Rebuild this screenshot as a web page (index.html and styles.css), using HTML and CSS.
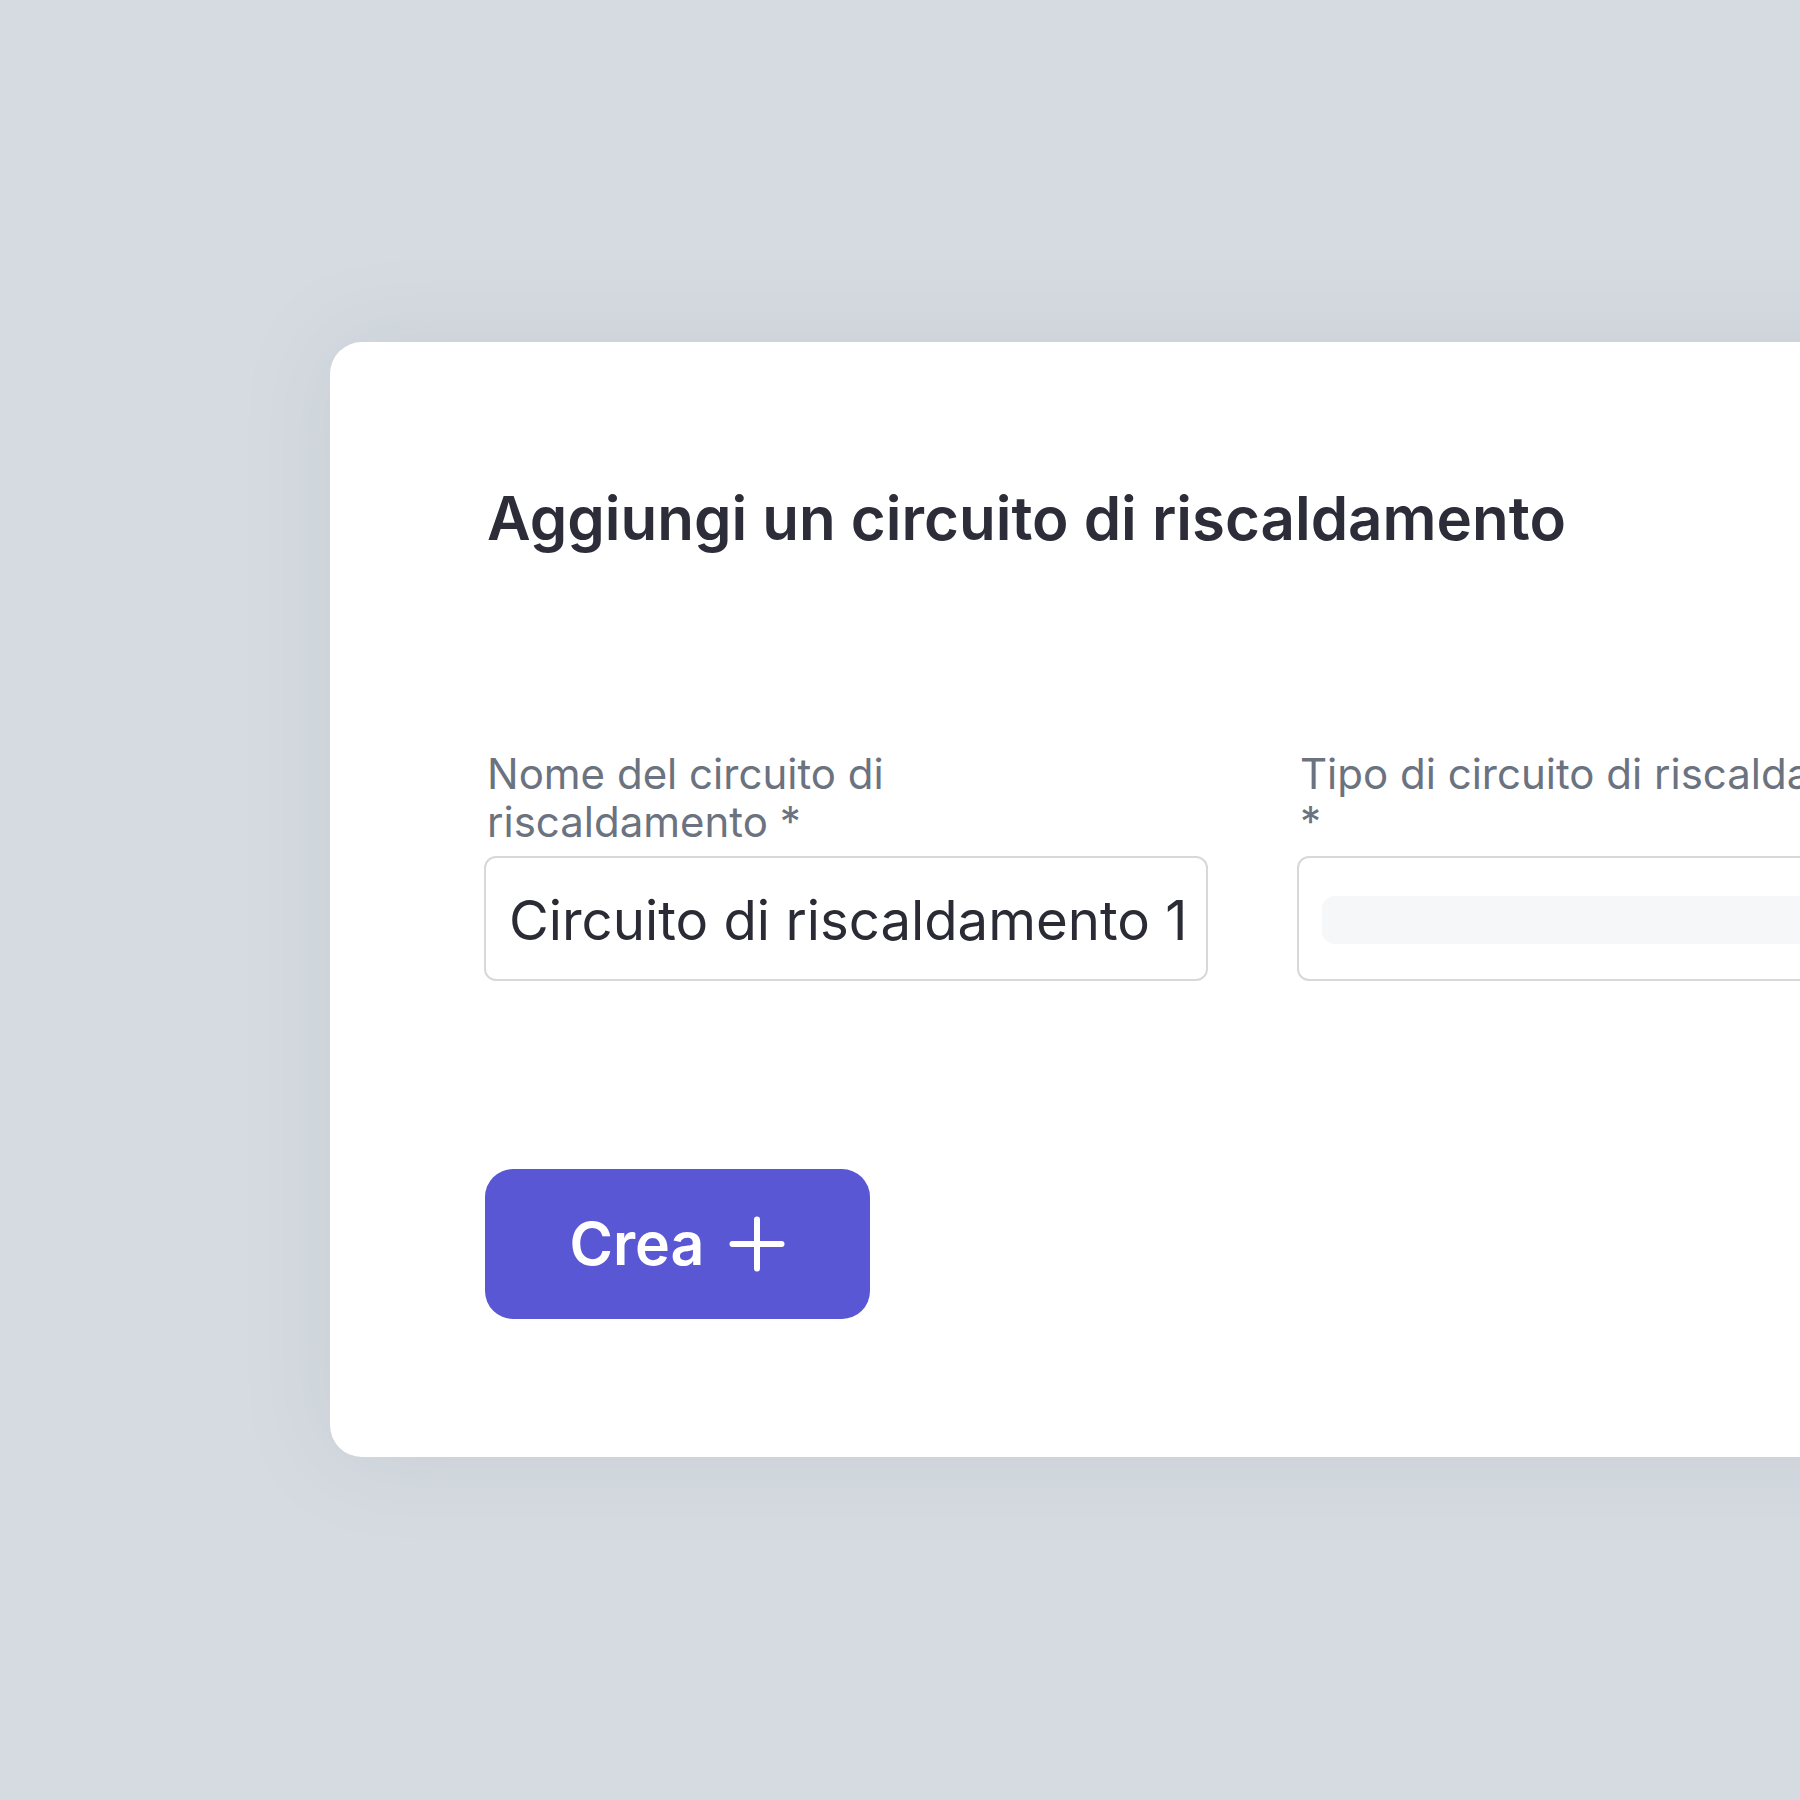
FILE: index.html
```html
<!DOCTYPE html>
<html lang="it">
<head>
<meta charset="utf-8">
<title>Aggiungi un circuito di riscaldamento</title>
<link rel="stylesheet" href="styles.css">
</head>
<body>
<div class="stage">
  <section class="card">
    <h1 class="title">Aggiungi un circuito di riscaldamento</h1>
    <div class="fields">
      <div class="field field-name">
        <label class="label label-name" for="nome">Nome del circuito di riscaldamento *</label>
        <div class="input">
          <span class="input-value" id="nome">Circuito di riscaldamento 1</span>
        </div>
      </div>
      <div class="field field-type">
        <label class="label label-type">Tipo di circuito di riscaldamento *</label>
        <div class="input">
          <span class="skeleton"></span>
        </div>
      </div>
    </div>
    <button class="btn" type="button">
      <span class="btn-text">Crea</span>
      <svg class="btn-icon" viewBox="0 0 56 56" width="56" height="56" aria-hidden="true">
        <line x1="28" y1="3.5" x2="28" y2="52.5"/>
        <line x1="3.5" y1="28" x2="52.5" y2="28"/>
      </svg>
    </button>
  </section>
</div>
</body>
</html>
```

FILE: styles.css
```css
html, body {
  margin: 0;
  padding: 0;
}

body {
  width: 1800px;
  height: 1800px;
  overflow: hidden;
  background: #d6dbe2;
  font-family: Inter, "Noto Sans", "Liberation Sans", sans-serif;
}

.stage {
  padding: 342px 0 0 330px;
}

.card {
  box-sizing: border-box;
  width: 1600px;
  background: #ffffff;
  border-radius: 32px;
  padding: 140px 0 138px 154px;
  box-shadow: 0 0 90px rgba(110, 125, 130, 0.14);
}

.title {
  margin: 0;
  padding-left: 3px;
  font-size: 60px;
  line-height: 72px;
  font-weight: 600;
  color: #2c2d38;
  letter-spacing: 0;
}

.fields {
  display: flex;
  gap: 89px;
  margin-top: 196px;
}

.field {
  display: flex;
  flex-direction: column;
  gap: 10px;
  width: 724px;
  flex: none;
}

.label {
  display: block;
  padding-left: 3px;
  font-size: 42px;
  line-height: 48px;
  color: #6b7280;
  font-weight: 400;
}

.label-name {
  max-width: 560px;
}

.label-type {
  max-width: 640px;
}

.input {
  box-sizing: border-box;
  height: 125px;
  border: 2px solid #d6d8dc;
  border-radius: 12px;
  padding: 2px 8px 0 23px;
  display: flex;
  align-items: center;
  background: #ffffff;
  overflow: hidden;
}

.input-value {
  font-size: 54.5px;
  line-height: 64px;
  color: #2a2b35;
  white-space: nowrap;
}

.skeleton {
  display: block;
  width: 100%;
  height: 48px;
  border-radius: 13px;
  background: #f6f7f9;
}

.btn {
  margin: 188px 0 0 1px;
  width: 385px;
  height: 150px;
  border: 0;
  border-radius: 28px;
  background: #5a57d5;
  color: #ffffff;
  display: flex;
  align-items: center;
  justify-content: center;
  gap: 25px;
  padding: 0;
  font-family: Inter, "Noto Sans", "Liberation Sans", sans-serif;
  cursor: pointer;
}

.btn-text {
  font-size: 59px;
  line-height: 64px;
  font-weight: 600;
}

.btn-icon {
  display: block;
  width: 56px;
  height: 56px;
}

.btn-icon line {
  stroke: #ffffff;
  stroke-width: 6;
  stroke-linecap: round;
}
```
